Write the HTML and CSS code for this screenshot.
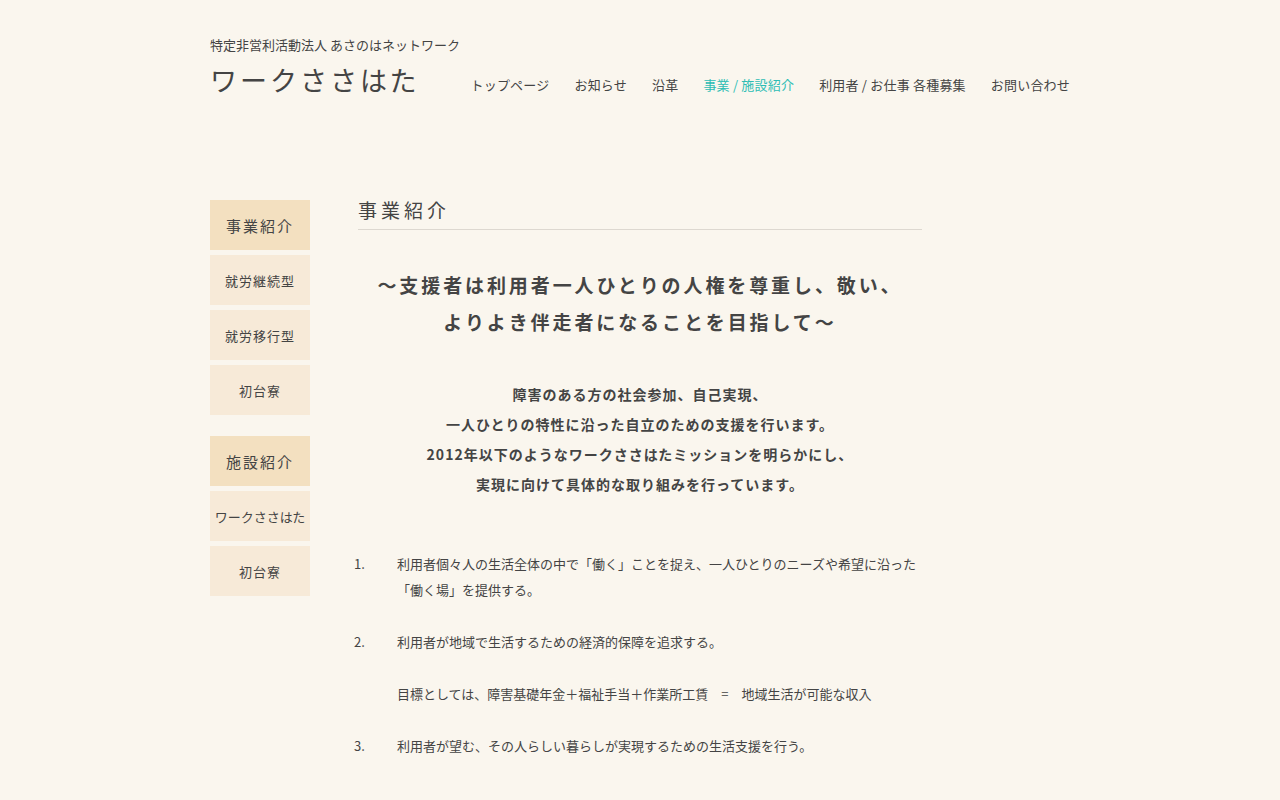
FILE: index.html
```html
<!DOCTYPE html>
<html lang="ja">

<head>
    <meta charset="UTF-8">
    <title>事業紹介 | ワークささはた</title>
    <link rel="stylesheet" href="styles.css">
</head>

<body>
    <header class="site-header">
        <p class="org">特定非営利活動法人 あさのはネットワーク</p>
        <div class="header-row">
            <h1 class="site-title">ワークささはた</h1>
            <nav class="global-nav">
                <a href="#">トップページ</a>
                <a href="#">お知らせ</a>
                <a href="#">沿革</a>
                <a href="#" class="current">事業 / 施設紹介</a>
                <a href="#">利用者 / お仕事 各種募集</a>
                <a href="#">お問い合わせ</a>
            </nav>
        </div>
    </header>

    <div class="wrap">
        <aside class="side">
            <ul class="side-menu">
                <li class="side-head">事業紹介</li>
                <li><a href="#">就労継続型</a></li>
                <li><a href="#">就労移行型</a></li>
                <li><a href="#">初台寮</a></li>
            </ul>
            <ul class="side-menu">
                <li class="side-head">施設紹介</li>
                <li><a href="#" class="narrow">ワークささはた</a></li>
                <li><a href="#">初台寮</a></li>
            </ul>
        </aside>

        <main class="content">
            <h2 class="page-title">事業紹介</h2>

            <p class="lead">～支援者は利用者一人ひとりの人権を尊重し、敬い、<br>よりよき伴走者になることを目指して～</p>

            <p class="mission">障害のある方の社会参加、自己実現、<br>一人ひとりの特性に沿った自立のための支援を行います。<br>2012年以下のようなワークささはたミッションを明らかにし、<br>実現に向けて具体的な取り組みを行っています。</p>

            <ol class="policy">
                <li>
                    <span class="num">1.</span>
                    <p>利用者個々人の生活全体の中で「働く」ことを捉え、一人ひとりのニーズや希望に沿った<br>「働く場」を提供する。</p>
                </li>
                <li>
                    <span class="num">2.</span>
                    <p>利用者が地域で生活するための経済的保障を追求する。</p>
                </li>
                <li class="note">
                    <span class="num"></span>
                    <p>目標としては、障害基礎年金＋福祉手当＋作業所工賃　=　地域生活が可能な収入</p>
                </li>
                <li>
                    <span class="num">3.</span>
                    <p>利用者が望む、その人らしい暮らしが実現するための生活支援を行う。</p>
                </li>
            </ol>
        </main>
    </div>
</body>

</html>
```

FILE: styles.css
```css
body {
    margin: 0;
    background-color: #faf6ee;
    color: #444;
    font-family: "Noto Sans CJK JP", "Noto Sans", sans-serif;
}

a {
    color: inherit;
    text-decoration: none;
}

.site-header {
    width: 860px;
    margin: 0 auto;
    padding-top: 35px;
}

.org {
    margin: 0;
    font-size: 13px;
    line-height: 20px;
}

.header-row {
    display: flex;
    align-items: center;
    justify-content: space-between;
    margin-top: 5px;
}

.site-title {
    margin: 0;
    font-size: 27px;
    font-weight: 400;
    letter-spacing: 3px;
    line-height: 40px;
}

.global-nav {
    display: flex;
    gap: 25px;
    font-size: 13px;
    letter-spacing: 0.2px;
    padding-top: 9px;
}

.global-nav .current {
    color: #2dbdb4;
}

.wrap {
    width: 860px;
    margin: 100px auto 0;
    display: flex;
    gap: 48px;
    padding-bottom: 40px;
}

.side {
    width: 100px;
    flex-shrink: 0;
    display: flex;
    flex-direction: column;
    gap: 21px;
}

.side-menu {
    list-style: none;
    margin: 0;
    padding: 0;
    display: flex;
    flex-direction: column;
    gap: 5px;
}

.side-menu li {
    height: 50px;
    display: flex;
    align-items: center;
    justify-content: center;
    background-color: #f7ead8;
    font-size: 13px;
    letter-spacing: 1px;
}

.side-menu .side-head {
    background-color: #f3e0c0;
    font-size: 15px;
    letter-spacing: 2px;
}

.side-menu .narrow {
    letter-spacing: 0;
}

.content {
    width: 564px;
}

.page-title {
    margin: 0;
    font-size: 19px;
    font-weight: 400;
    letter-spacing: 4px;
    line-height: 20px;
    padding-bottom: 9px;
    border-bottom: 1px solid #ddd8d0;
}

.lead {
    margin: 36px 0 0;
    text-align: center;
    font-size: 19px;
    font-weight: 700;
    letter-spacing: 2.9px;
    line-height: 37px;
}

.mission {
    margin: 39px 0 0;
    text-align: center;
    font-size: 14px;
    font-weight: 700;
    letter-spacing: 1px;
    line-height: 30px;
}

.policy {
    list-style: none;
    margin: 52px 0 0;
    padding: 0;
    font-size: 13px;
    line-height: 26px;
}

.policy li {
    display: flex;
    margin-bottom: 26px;
}

.policy .num {
    width: 43px;
    flex-shrink: 0;
    margin-left: -4px;
}

.policy p {
    margin: 0;
}
```
